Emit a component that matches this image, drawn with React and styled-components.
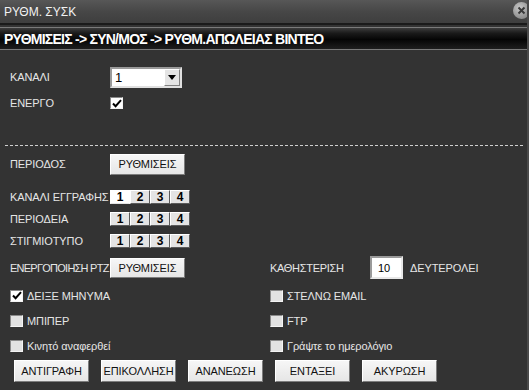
import React, { useState } from "react";
import styled, { createGlobalStyle } from "styled-components";

const GlobalStyle = createGlobalStyle`
  html, body {
    margin: 0;
    padding: 0;
    background: #333333;
  }
  * { box-sizing: border-box; }
`;

// whole dialog window
const Window = styled.div`
  width: 529px;
  height: 390px;
  background: #333333;
  border-right: 2px solid #4a4a4a;
  display: flex;
  flex-direction: column;
  overflow: hidden;
  font-family: "Liberation Sans", Arial, sans-serif;
  font-size: 11px;
  color: #e6e6e6;
`;

const TitleBar = styled.div`
  height: 25px;
  display: flex;
  align-items: center;
  padding-left: 4px;
  background: linear-gradient(#575757, #474747 50%, #3e3e3e);
  border-bottom: 2px solid #1a1a1a;
  font-size: 12px;
  color: #f2f2f2;
`;

const CloseButton = styled.div`
  margin-left: auto;
  margin-right: -3px;
  margin-top: -2px;
  width: 17px;
  height: 17px;
  border-radius: 50%;
  background: radial-gradient(circle at 40% 35%, #c8c8c8, #8e8e8e 70%);
  display: flex;
  align-items: center;
  justify-content: center;
`;

const HeaderBar = styled.div`
  margin-top: 2px;
  height: 23px;
  display: flex;
  align-items: center;
  padding-left: 4px;
  border-top: 1px solid #7a7a7a;
  border-bottom: 1px solid #7a7a7a;
  background: linear-gradient(#3c3c3c, #1a1a1a 25%, #050505 55%, #1e1e1e);
  font-weight: bold;
  font-size: 14px;
  letter-spacing: -0.75px;
  color: #ffffff;
`;

const Content = styled.div`
  display: flex;
  flex-direction: column;
  padding: 0 0 0 10px;
`;

const Row = styled.div`
  height: ${(p) => p.h || 22}px;
  margin-top: ${(p) => p.mt || 0}px;
  display: flex;
  align-items: center;
`;

const Label = styled.div`
  width: ${(p) => p.w || 100}px;
  flex-shrink: 0;
  white-space: nowrap;
  letter-spacing: ${(p) => p.ls ?? -0.1}px;
`;

const Text = styled.span`
  white-space: nowrap;
  letter-spacing: -0.1px;
`;

const Divider = styled.div`
  margin: 31px 4px 0 -5px;
  border-top: 1px dashed #d0d0d0;
  height: 1px;
`;

const Select = styled.div`
  width: 72px;
  height: 21px;
  background: #ffffff;
  border: 2px solid;
  border-color: #9a9a9a #e0e0e0 #e0e0e0 #9a9a9a;
  display: flex;
  align-items: center;
  padding-left: 3px;
  color: #000;
  font-size: 13px;
`;

const SelectArrow = styled.div`
  margin-left: auto;
  width: 16px;
  height: 17px;
  background: #e4e4e4;
  border: 1px solid;
  border-color: #ffffff #808080 #808080 #ffffff;
  display: flex;
  align-items: center;
  justify-content: center;
`;

const Box = styled.div`
  width: 13px;
  height: 12px;
  flex-shrink: 0;
  background: ${(p) => (p.light ? "#ffffff" : "#e2e2e2")};
  border: 1px solid;
  border-color: #8a8a8a #f4f4f4 #f4f4f4 #8a8a8a;
  display: flex;
  align-items: center;
  justify-content: center;
`;

const CheckLine = styled.label`
  display: flex;
  align-items: center;
  gap: 4px;
  cursor: default;
`;

const Button = styled.button`
  width: ${(p) => p.w || 75}px;
  height: ${(p) => p.h || 21}px;
  padding: 0;
  background: linear-gradient(#f6f6f6, #e6e6e6);
  border: 1px solid;
  border-color: #ffffff #7c7c7c #7c7c7c #ffffff;
  font-family: "Liberation Sans", Arial, sans-serif;
  font-size: 11px;
  letter-spacing: -0.1px;
  color: #111;
  flex-shrink: 0;
`;

const NumGroup = styled.div`
  display: flex;
  width: 80px;
  height: 14px;
`;

const Num = styled.div`
  flex: 1;
  display: flex;
  align-items: center;
  justify-content: center;
  background: ${(p) => (p.on ? "#ffffff" : "#e4e4e4")};
  border: 1px solid;
  border-color: ${(p) => (p.on ? "#ffffff #ffffff #e4e4e4 #ffffff" : "#ffffff #5a5a5a #5a5a5a #ffffff")};
  color: #000;
  font-weight: bold;
  font-size: 12px;
`;

const Split = styled.div`
  display: grid;
  grid-template-columns: 260px 1fr;
`;

const Col = styled.div`
  display: flex;
  flex-direction: column;
`;

const NumInput = styled.div`
  width: 33px;
  height: 23px;
  background: #ffffff;
  border: 2px solid;
  border-color: #9a9a9a #e8e8e8 #e8e8e8 #9a9a9a;
  color: #000;
  display: flex;
  align-items: center;
  padding-left: 6px;
  font-size: 11px;
  margin-right: 7px;
`;

const ButtonBar = styled.div`
  display: flex;
  gap: 12px;
  margin-top: 2px;
  padding-left: 4px;
`;

const Tick = () => (
  <svg width="10" height="9" viewBox="0 0 10 9">
    <path d="M1 4.5 L3.6 7.2 L9 1.2" fill="none" stroke="#000" strokeWidth="2" />
  </svg>
);

const CheckBox = ({ checked }) => <Box light={checked}>{checked && <Tick />}</Box>;

const Channels = ({ active }) => (
  <NumGroup>
    {[1, 2, 3, 4].map((n) => (
      <Num key={n} on={active === n}>
        {n}
      </Num>
    ))}
  </NumGroup>
);

function App() {
  const [channel] = useState("1");
  return (
    <>
      <GlobalStyle />
      <Window>
        <TitleBar>
          ΡΥΘΜ. ΣΥΣΚ
          <CloseButton>
            <svg width="9" height="9" viewBox="0 0 9 9">
              <path d="M1.5 1.5 L7.5 7.5 M7.5 1.5 L1.5 7.5" stroke="#3a3a3a" strokeWidth="2" />
            </svg>
          </CloseButton>
        </TitleBar>
        <HeaderBar>ΡΥΘΜΙΣΕΙΣ -&gt; ΣΥΝ/ΜΟΣ -&gt; ΡΥΘΜ.ΑΠΩΛΕΙΑΣ ΒΙΝΤΕΟ</HeaderBar>
        <Content>
          <Row mt={16}>
            <Label>ΚΑΝΑΛΙ</Label>
            <Select>
              {channel}
              <SelectArrow>
                <svg width="8" height="5" viewBox="0 0 8 5">
                  <path d="M0 0 H8 L4 5 Z" fill="#000" />
                </svg>
              </SelectArrow>
            </Select>
          </Row>
          <Row mt={4}>
            <Label>ΕΝΕΡΓΟ</Label>
            <CheckBox checked />
          </Row>
          <Divider />
          <Row mt={7}>
            <Label>ΠΕΡΙΟΔΟΣ</Label>
            <Button>ΡΥΘΜΙΣΕΙΣ</Button>
          </Row>
          <Row mt={11}>
            <Label>ΚΑΝΑΛΙ ΕΓΓΡΑΦΗΣ</Label>
            <Channels active={1} />
          </Row>
          <Row>
            <Label>ΠΕΡΙΟΔΕΙΑ</Label>
            <Channels />
          </Row>
          <Row>
            <Label>ΣΤΙΓΜΙΟΤΥΠΟ</Label>
            <Channels />
          </Row>
          <Split>
            <Col>
              <Row h={31}>
                <Label ls={-0.75}>ΕΝΕΡΓΟΠΟΙΗΣΗ PTZ</Label>
                <Button h={20}>ΡΥΘΜΙΣΕΙΣ</Button>
              </Row>
              <Row h={25}>
                <CheckLine>
                  <CheckBox checked />
                  <Text>ΔΕΙΞΕ ΜΗΝΥΜΑ</Text>
                </CheckLine>
              </Row>
              <Row h={25}>
                <CheckLine>
                  <CheckBox />
                  <Text>ΜΠΙΠΕΡ</Text>
                </CheckLine>
              </Row>
              <Row h={25}>
                <CheckLine>
                  <CheckBox />
                  <Text>Κινητό αναφερθεί</Text>
                </CheckLine>
              </Row>
            </Col>
            <Col>
              <Row h={31}>
                <Label w={100} ls={-0.3}>ΚΑΘΗΣΤΕΡΙΣΗ</Label>
                <NumInput>10</NumInput>
                <Text>ΔΕΥΤΕΡΟΛΕΙ</Text>
              </Row>
              <Row h={25}>
                <CheckLine>
                  <CheckBox />
                  <Text>ΣΤΕΛΝΩ EMAIL</Text>
                </CheckLine>
              </Row>
              <Row h={25}>
                <CheckLine>
                  <CheckBox />
                  <Text>FTP</Text>
                </CheckLine>
              </Row>
              <Row h={25}>
                <CheckLine>
                  <CheckBox />
                  <Text>Γράψτε το ημερολόγιο</Text>
                </CheckLine>
              </Row>
            </Col>
          </Split>
          <ButtonBar>
            <Button h={22}>ΑΝΤΙΓΡΑΦΗ</Button>
            <Button h={22}>ΕΠΙΚΟΛΛΗΣΗ</Button>
            <Button h={22}>ΑΝΑΝΕΩΣΗ</Button>
            <Button h={22}>ΕΝΤΑΞΕΙ</Button>
            <Button h={22}>ΑΚΥΡΩΣΗ</Button>
          </ButtonBar>
        </Content>
      </Window>
    </>
  );
}

export default App;
